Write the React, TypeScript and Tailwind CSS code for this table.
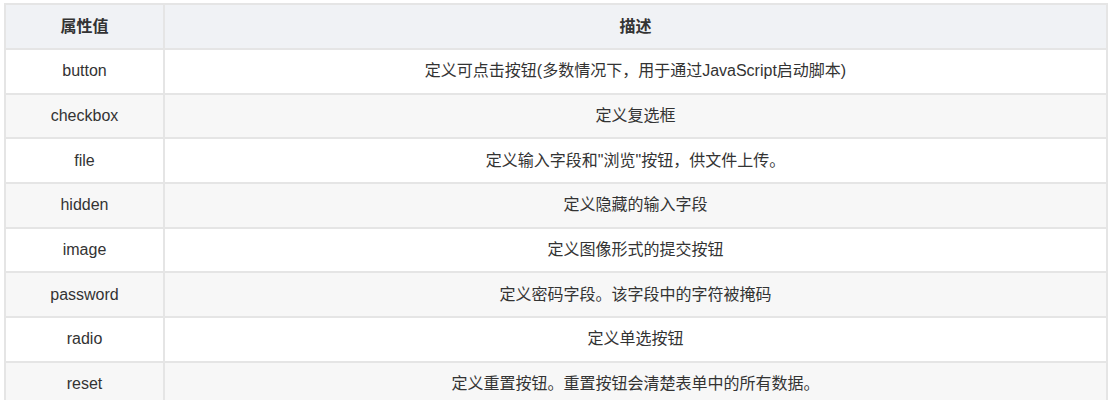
import React from 'react';

const rows: [string, string][] = [
  ['button', '定义可点击按钮(多数情况下，用于通过JavaScript启动脚本)'],
  ['checkbox', '定义复选框'],
  ['file', '定义输入字段和"浏览"按钮，供文件上传。'],
  ['hidden', '定义隐藏的输入字段'],
  ['image', '定义图像形式的提交按钮'],
  ['password', '定义密码字段。该字段中的字符被掩码'],
  ['radio', '定义单选按钮'],
  ['reset', '定义重置按钮。重置按钮会清楚表单中的所有数据。'],
];

const App: React.FC = () => {
  return (
    <div
      className="w-[1115px] h-[400px] overflow-hidden bg-white pt-[3px] pl-[4px]"
      style={{ fontFamily: '"Liberation Sans", "Noto Sans CJK SC", sans-serif' }}
    >
      <table className="w-[1104px] border-collapse text-[16px] text-[#333]">
        <thead>
          <tr className="h-[45px] bg-[#f0f2f5]">
            <th className="w-[159px] border-2 border-[#e5e5e5] font-bold text-center">属性值</th>
            <th className="border-2 border-[#e5e5e5] font-bold text-center">描述</th>
          </tr>
        </thead>
        <tbody>
          {rows.map(([name, desc], i) => (
            <tr key={name} className={`h-[44.7px] ${i % 2 === 1 ? 'bg-[#f7f7f7]' : 'bg-white'}`}>
              <td className="border-2 border-[#e5e5e5] text-center">{name}</td>
              <td className="border-2 border-[#e5e5e5] text-center">{desc}</td>
            </tr>
          ))}
        </tbody>
      </table>
    </div>
  );
};

export default App;
